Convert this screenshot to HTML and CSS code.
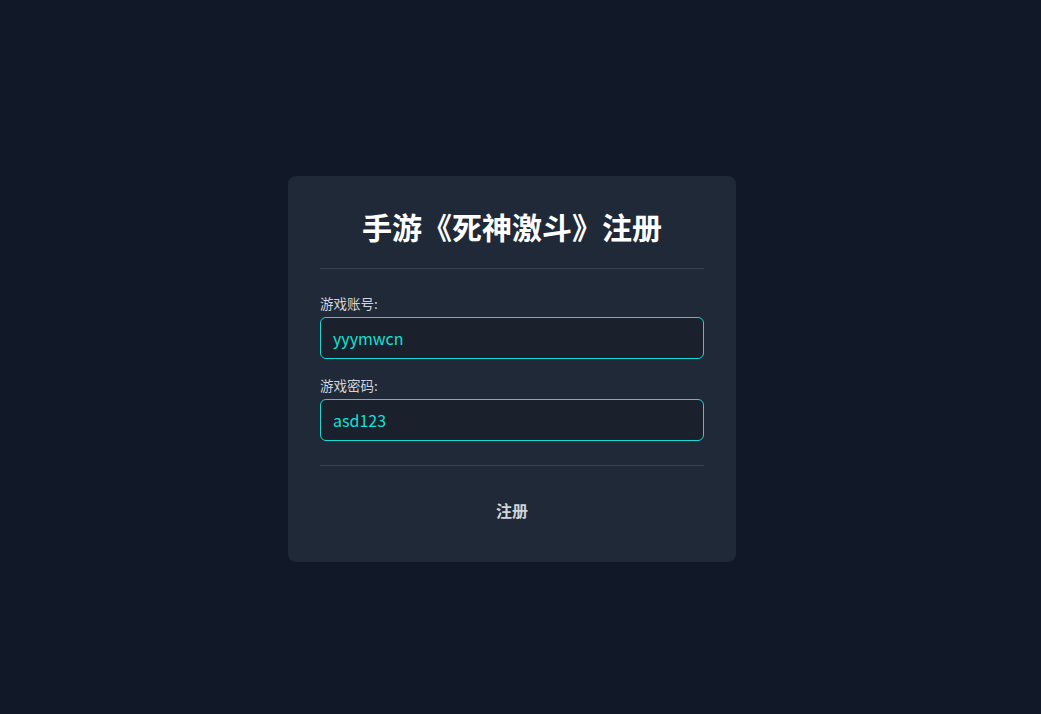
FILE: index.html
```html
<!DOCTYPE html>
<html lang="zh-CN">
<head>
<meta charset="utf-8">
<title>手游《死神激斗》注册</title>
<link rel="stylesheet" href="styles.css">
</head>
<body>
<div class="page">
  <form class="card">
    <h1 class="title">手游《死神激斗》注册</h1>
    <div class="divider"></div>
    <div class="field">
      <label class="label">游戏账号:</label>
      <input class="input" type="text" value="yyymwcn">
    </div>
    <div class="field">
      <label class="label">游戏密码:</label>
      <input class="input" type="text" value="asd123">
    </div>
    <div class="divider divider-bottom"></div>
    <button type="button" class="btn">注册</button>
  </form>
</div>
</body>
</html>
```

FILE: styles.css
```css
html, body {
  margin: 0;
  padding: 0;
  background: #111827;
  font-family: "Noto Sans CJK SC", "Noto Sans", sans-serif;
}
.page {
  display: flex;
  justify-content: center;
  align-items: flex-start;
  padding: 176px 17px 0 0;
  min-height: 714px;
  box-sizing: border-box;
}
.card {
  width: 448px;
  box-sizing: border-box;
  background: #1f2937;
  border-radius: 8px;
  padding: 32px;
  display: flex;
  flex-direction: column;
}
.title {
  margin: 0 0 24px;
  font-size: 30px;
  line-height: 36px;
  font-weight: 700;
  color: #ffffff;
  text-align: center;
}
.divider {
  height: 1px;
  background: #374151;
  margin-bottom: 24px;
}
.divider-bottom {
  margin-top: 8px;
}
.field {
  display: flex;
  flex-direction: column;
  margin-bottom: 16px;
}
.label {
  font-size: 13.5px;
  line-height: 20px;
  color: #d1d5db;
  margin-bottom: 4px;
}
.input {
  height: 42px;
  box-sizing: border-box;
  background: #1a202c;
  border: 1px solid #13dcd4;
  border-radius: 6px;
  padding: 8px 12px;
  font-family: "Noto Sans CJK SC", "Noto Sans", sans-serif;
  font-size: 16px;
  line-height: 24px;
  color: #13e0d6;
  outline: none;
}
.btn {
  height: 40px;
  background: transparent;
  border: 0;
  font-family: "Noto Sans CJK SC", "Noto Sans", sans-serif;
  font-size: 16px;
  line-height: 24px;
  font-weight: 700;
  color: #d1d5db;
  padding: 0;
  cursor: pointer;
}
```
